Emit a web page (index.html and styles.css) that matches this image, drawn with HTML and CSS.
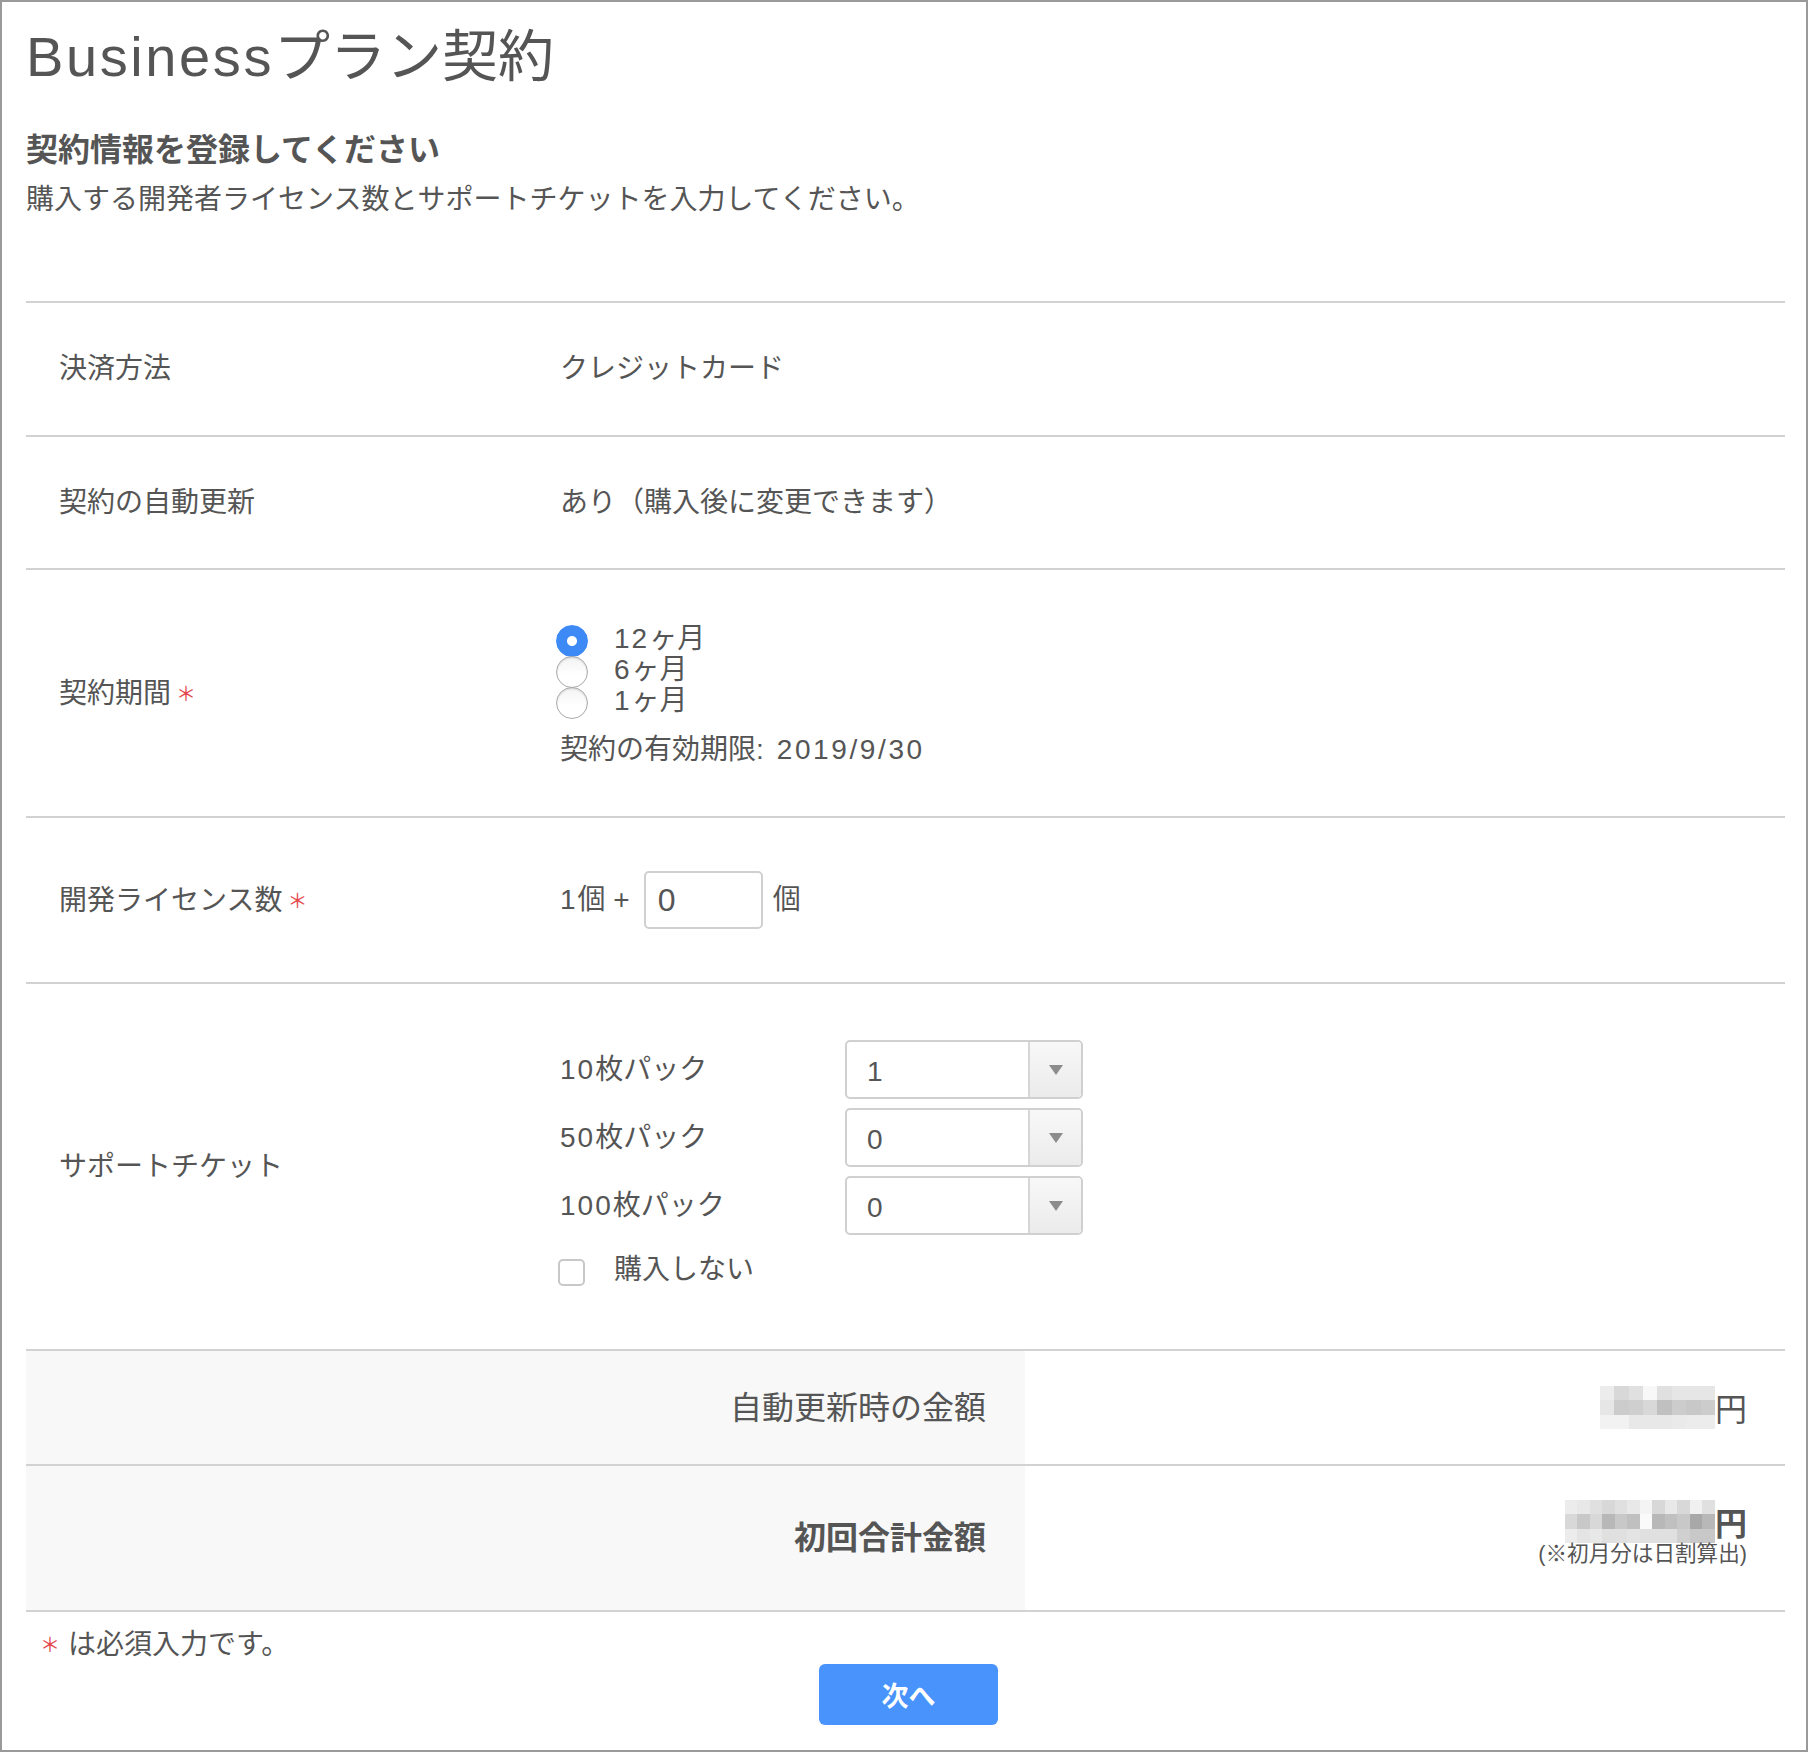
FILE: index.html
```html
<!DOCTYPE html>
<html lang="ja">
<head>
<meta charset="utf-8">
<title>Businessプラン契約</title>
<link rel="stylesheet" href="styles.css">
</head>
<body>
<div class="page">
  <h1 class="title"><span class="lat-title">Business</span>プラン契約</h1>
  <h2 class="subtitle">契約情報を登録してください</h2>
  <p class="desc">購入する開発者ライセンス数とサポートチケットを入力してください。</p>

  <div class="table">
    <div class="row">
      <div class="label">決済方法</div>
      <div class="value v-pay">クレジットカード</div>
    </div>
    <div class="row">
      <div class="label">契約の自動更新</div>
      <div class="value v-auto">あり（購入後に変更できます）</div>
    </div>
    <div class="row">
      <div class="label">契約期間<span class="req-mark">＊</span></div>
      <div class="value v-period">
        <div class="options">
          <label class="opt"><input type="radio" name="period" class="radio" checked><span><span class="dig">12</span>ヶ月</span></label>
          <label class="opt"><input type="radio" name="period" class="radio"><span><span class="dig">6</span>ヶ月</span></label>
          <label class="opt"><input type="radio" name="period" class="radio"><span><span class="dig">1</span>ヶ月</span></label>
        </div>
        <div class="expiry">契約の有効期限<span class="date">: 2019/9/30</span></div>
      </div>
    </div>
    <div class="row">
      <div class="label">開発ライセンス数<span class="req-mark">＊</span></div>
      <div class="value v-license">
        <span><span class="dig">1</span>個 <span class="dig">+</span></span>
        <input class="num" type="text" value="0">
        <span class="unit">個</span>
      </div>
    </div>
    <div class="row">
      <div class="label">サポートチケット</div>
      <div class="value v-tickets">
        <div class="packs">
          <div class="pack">
            <span class="pack-label"><span class="dig">10</span>枚パック</span>
            <div class="select"><span class="sel-val">1</span><span class="sel-btn"><span class="tri"></span></span></div>
          </div>
          <div class="pack">
            <span class="pack-label"><span class="dig">50</span>枚パック</span>
            <div class="select"><span class="sel-val">0</span><span class="sel-btn"><span class="tri"></span></span></div>
          </div>
          <div class="pack">
            <span class="pack-label"><span class="dig">100</span>枚パック</span>
            <div class="select"><span class="sel-val">0</span><span class="sel-btn"><span class="tri"></span></span></div>
          </div>
        </div>
        <label class="nobuy"><span class="check"></span><span>購入しない</span></label>
      </div>
    </div>
    <div class="sum">
      <div class="sum-label">自動更新時の金額</div>
      <div class="sum-value s-auto">
        <div class="amount">
          <span class="pix pix8">
            <i style="background:#ececec"></i><i style="background:#d8d8d8"></i><i style="background:#e0e0e0"></i><i style="background:#f8f8f8"></i><i style="background:#e0e0e0"></i><i style="background:#e6e6e6"></i><i style="background:#e6e6e6"></i><i style="background:#e6e6e6"></i>
            <i style="background:#e6e6e6"></i><i style="background:#cccccc"></i><i style="background:#cfcfcf"></i><i style="background:#d8d8d8"></i><i style="background:#c0c0c0"></i><i style="background:#cccccc"></i><i style="background:#c8c8c8"></i><i style="background:#cccccc"></i>
            <i style="background:#f2f2f2"></i><i style="background:#f2f2f2"></i><i style="background:#e8e8e8"></i><i style="background:#e8e8e8"></i><i style="background:#e8e8e8"></i><i style="background:#eaeaea"></i><i style="background:#ececec"></i><i style="background:#ececec"></i>
          </span><span class="yen">円</span>
        </div>
      </div>
    </div>
    <div class="sum">
      <div class="sum-label bold">初回合計金額</div>
      <div class="sum-value s-total">
        <div class="amount">
          <span class="pix pix12">
            <i style="background:#ececec"></i><i style="background:#e8e8e8"></i><i style="background:#e0e0e0"></i><i style="background:#d8d8d8"></i><i style="background:#e0e0e0"></i><i style="background:#e8e8e8"></i><i style="background:#f4f4f4"></i><i style="background:#d8d8d8"></i><i style="background:#e8e8e8"></i><i style="background:#d8d8d8"></i><i style="background:#f0f0f0"></i><i style="background:#e0e0e0"></i>
            <i style="background:#d8d8d8"></i><i style="background:#c8c8c8"></i><i style="background:#d8d8d8"></i><i style="background:#b8b8b8"></i><i style="background:#c8c8c8"></i><i style="background:#c0c0c0"></i><i style="background:#fafafa"></i><i style="background:#b8b8b8"></i><i style="background:#c0c0c0"></i><i style="background:#c8c8c8"></i><i style="background:#a8a8a8"></i><i style="background:#b8b8b8"></i>
            <i style="background:#ececec"></i><i style="background:#e4e4e4"></i><i style="background:#e8e8e8"></i><i style="background:#e0e0e0"></i><i style="background:#e0e0e0"></i><i style="background:#e4e4e4"></i><i style="background:#e0e0e0"></i><i style="background:#e0e0e0"></i><i style="background:#e0e0e0"></i><i style="background:#d0d0d0"></i><i style="background:#c8c8c8"></i><i style="background:#c8c8c8"></i>
          </span><span class="yen bold">円</span>
        </div>
        <div class="note">(※初月分は日割算出)</div>
      </div>
    </div>
  </div>

  <div class="footer">
    <p class="req"><span class="req-mark foot">＊</span>は必須入力です。</p>
    <button class="next" type="button">次へ</button>
  </div>
</div>
</body>
</html>
```

FILE: styles.css
```css
html, body {
  margin: 0;
  padding: 0;
  background: #fff;
}

.page {
  width: 1808px;
  height: 1752px;
  box-sizing: border-box;
  border: 2px solid #9a9a9a;
  padding: 0 21px 0 24px;
  color: #555;
  font-family: "Liberation Sans", "Noto Sans CJK JP", sans-serif;
  font-size: 28px;
  line-height: 36px;
}

.title {
  margin: 21px 0 0;
  font-size: 56px;
  line-height: 68px;
  font-weight: 400;
}

.lat-title {
  letter-spacing: 2.6px;
}

.dig {
  letter-spacing: 2px;
}

.date {
  letter-spacing: 2.6px;
}

.subtitle {
  margin: 39px 0 0;
  font-size: 32px;
  line-height: 40px;
  font-weight: 700;
}

.desc {
  margin: 12px 0 0;
}

.table {
  margin-top: 83px;
  border-top: 2px solid #d2d2d2;
}

.row {
  display: grid;
  grid-template-columns: 534px 1fr;
  align-items: center;
  border-bottom: 2px solid #d2d2d2;
}

.label {
  padding-left: 33px;
}

.req-mark {
  color: #e4474d;
  font-family: "Noto Sans CJK JP", sans-serif;
  font-size: 20px;
  margin-left: 5px;
  vertical-align: 2px;
}

.req-mark.foot {
  margin-left: 0;
  margin-right: 8px;
}

.v-pay { padding: 48px 0; }
.v-auto { padding: 48px 0 47px; }

/* period */
.v-period { padding: 53px 0 48px; }

.options {
  display: flex;
  flex-direction: column;
}

.opt {
  display: flex;
  align-items: center;
  height: 31px;
  line-height: 31px;
  gap: 26px;
}

.radio {
  appearance: none;
  -webkit-appearance: none;
  flex: none;
  width: 32px;
  height: 32px;
  margin: 4px 0 0 -4px;
  box-sizing: border-box;
  border-radius: 50%;
  border: 1.5px solid #ababab;
  background: linear-gradient(#f3f3f3, #fff 60%);
  box-shadow: inset 0 1px 2px rgba(0, 0, 0, 0.14);
}

.radio:checked {
  border-color: #3d8af7;
  background: radial-gradient(circle, #fff 0 4.5px, #3d8af7 5.5px);
  box-shadow: none;
}

.expiry {
  margin-top: 16px;
}

/* license */
.v-license {
  display: flex;
  align-items: center;
  padding: 53px 0;
}

.num {
  width: 119px;
  height: 58px;
  box-sizing: border-box;
  margin: 0 0 0 12px;
  padding: 0 12px;
  border: 2px solid #d0d0d0;
  border-radius: 5px;
  font-family: "Liberation Sans", sans-serif;
  font-size: 32px;
  color: #555;
  background: #fff;
  outline: none;
}

.unit {
  margin-left: 10px;
}

/* tickets */
.v-tickets {
  padding: 56px 0 61px;
}

.packs {
  display: flex;
  flex-direction: column;
  gap: 9px;
}

.pack {
  display: flex;
  align-items: center;
}

.pack-label {
  width: 285px;
}

.select {
  display: flex;
  width: 238px;
  height: 59px;
  box-sizing: border-box;
  border: 2px solid #d0d0d0;
  border-radius: 5px;
  overflow: hidden;
  background: #fff;
}

.sel-val {
  flex: 1;
  display: flex;
  align-items: center;
  padding-left: 20px;
  padding-top: 4px;
}

.sel-btn {
  width: 51px;
  border-left: 2px solid #d6d6d6;
  background: linear-gradient(#f8f8f8, #ebebeb);
  display: flex;
  align-items: center;
  justify-content: center;
}

.tri {
  width: 0;
  height: 0;
  border-left: 7px solid transparent;
  border-right: 7px solid transparent;
  border-top: 10px solid #8c8c8c;
}

.nobuy {
  display: flex;
  align-items: center;
  height: 36px;
  margin-top: 17px;
}

.check {
  flex: none;
  width: 27px;
  height: 27px;
  box-sizing: border-box;
  margin: 4px 29px 0 -2px;
  border: 2px solid #c8c8c8;
  border-radius: 5px;
  background: #fff;
}

/* summary */
.sum {
  display: grid;
  grid-template-columns: 999px 1fr;
  border-bottom: 2px solid #d2d2d2;
}

.sum-label {
  background: #f8f8f8;
  display: flex;
  align-items: center;
  justify-content: flex-end;
  padding-right: 39px;
  font-size: 32px;
  line-height: 40px;
}

.bold {
  font-weight: 700;
}

.sum-value {
  display: flex;
  flex-direction: column;
  align-items: flex-end;
  justify-content: center;
  padding-right: 38px;
}

.s-auto { padding-top: 35px; padding-bottom: 35px; }
.s-total { padding-top: 34px; padding-bottom: 45px; }

.amount {
  display: flex;
  align-items: center;
  height: 43px;
  font-size: 32px;
  line-height: 43px;
}

.pix {
  display: grid;
  grid-auto-rows: 14.33px;
}

.pix8 { grid-template-columns: repeat(8, 14.375px); }
.pix12 { grid-template-columns: repeat(12, 12.5px); }

.pix i {
  display: block;
}

.yen {
  font-family: "Noto Sans CJK JP", sans-serif;
}

.note {
  font-size: 21.6px;
  line-height: 22px;
}

/* footer */
.footer {
  display: flex;
  flex-direction: column;
}

.req {
  margin: 14px 0 0;
  padding-left: 14px;
}

.next {
  display: block;
  margin: 1px 0 0 calc(50% - 86.5px);
  width: 179px;
  height: 61px;
  border: none;
  border-radius: 6px;
  background: #4993fd;
  color: #fff;
  font-family: "Liberation Sans", "Noto Sans CJK JP", sans-serif;
  font-size: 27px;
  font-weight: 700;
  padding: 0;
}
```
